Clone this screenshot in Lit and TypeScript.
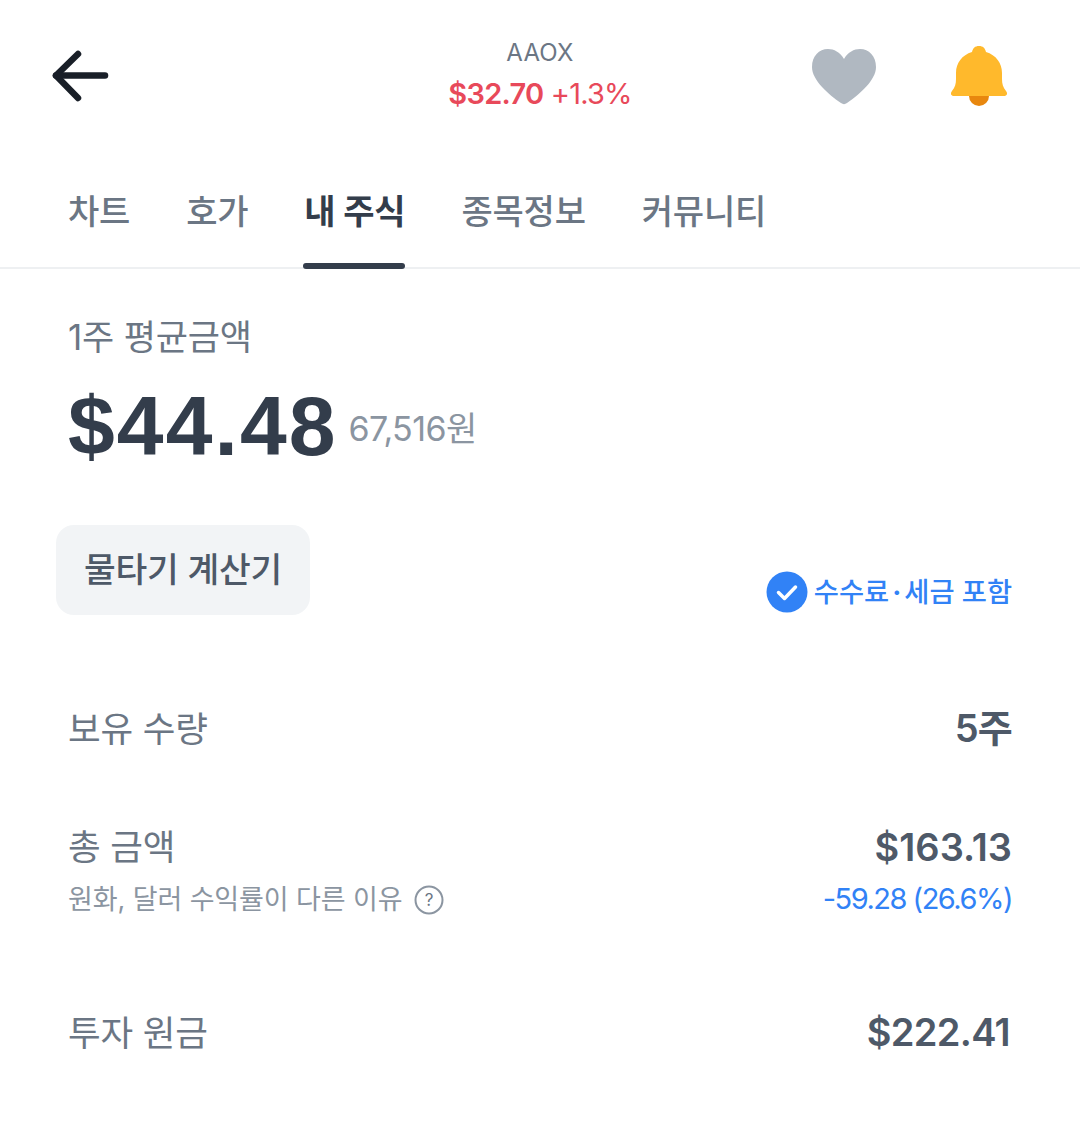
import { LitElement, html, css } from "lit";
import { customElement } from "lit/decorators.js";

@customElement("app-root")
export class AppRoot extends LitElement {
  static styles = css`
    :host { display: block; width: 1080px; height: 1139px; overflow: hidden; background: #fff; font-family: Inter, "Noto Sans CJK KR", sans-serif; color: #333d4b; }
    * { box-sizing: border-box; }
    .top { display: grid; grid-template-columns: 1fr auto 1fr; align-items: center; height: 152px; padding: 0 72px 0 48px; }
    .back { display: block; width: 64px; height: 60px; }
    .ticker { text-align: center; margin-top: -1px; transform: translateX(12px); }
    .sym { font-size: 24px; line-height: 30px; color: #6b7684; letter-spacing: 0.2px; }
    .quote { font-size: 29px; line-height: 40px; color: #e8495a; letter-spacing: -0.8px; margin-top: 6px; }
    .quote b { font-weight: 600; letter-spacing: -0.7px; }
    .icons { display: flex; justify-content: flex-end; gap: 74px; align-items: center; }
    .tabs { display: flex; height: 117px; border-bottom: 2px solid #eef0f2; padding-left: 68px; gap: 56px; position: relative; }
    .tab { font-size: 34px; line-height: 46px; padding-top: 37px; color: #6b7684; position: relative; font-weight: 500; letter-spacing: -0.2px; }
    .tab.on { color: #333d4b; font-weight: 700; }
    .tab.on::after { content: ""; position: absolute; left: -1px; right: 0; bottom: -2px; height: 6px; border-radius: 3px; background: #333d4b; }
    .main { padding: 45px 68px 0; }
    .lbl { font-size: 35px; line-height: 46px; color: #6b7684; letter-spacing: -0.2px; font-weight: 400; }
    .price { display: flex; align-items: center; gap: 11px; margin-top: 16px; }
    .price b { font-family: "Liberation Sans", Arial, sans-serif; font-size: 84px; line-height: 100px; font-weight: 700; letter-spacing: 2.1px; }
    .price span { font-size: 34px; color: #8b95a1; letter-spacing: -0.6px; }
    .tools { display: flex; justify-content: space-between; align-items: flex-end; margin: 49px 0 0 -12px; }
    .calc { width: 254px; height: 90px; border-radius: 18px; background: #f2f4f6; display: flex; align-items: center; justify-content: center; font-size: 34.500px; line-height: 1; color: #4e5968; font-weight: 500; letter-spacing: -0.2px; }
    .fee { display: flex; align-items: center; gap: 6px; font-size: 27.300px; line-height: 1; color: #3182f6; font-weight: 500; height: 42px; margin-bottom: 2px; }
    .fee span { padding-top: 2px; }
    .fee i { font-style: normal; font-weight: 700; margin: 0 3px; }
    .row { display: flex; justify-content: space-between; align-items: flex-start; }
    .k { font-size: 35.500px; line-height: 46px; color: #6b7684; letter-spacing: -0.2px; }
    .v { font-size: 38px; line-height: 46px; font-weight: 600; color: #4e5968; text-align: right; letter-spacing: -0.8px; margin-top: -2px; }
    .v.wide { letter-spacing: 0; margin-top: -1px; }
    .v.end { margin-right: 2px; letter-spacing: -0.7px; }
    .sub { display: flex; align-items: center; gap: 11px; font-size: 27px; line-height: 38px; color: #8b95a1; margin-top: 10px; letter-spacing: -0.1px; }
    .delta { font-size: 29px; line-height: 38px; color: #3182f6; font-weight: 400; margin-top: 10px; letter-spacing: -1.500px; }
    .r1 { margin-top: 92px; }
    .r2 { margin-top: 72px; }
    .r3 { margin-top: 92px; }
    svg { display: block; }
  `;

  render() {
    return html`
      <div class="top">
        <svg class="back" viewBox="0 0 64 60" fill="none" stroke="#191f28" stroke-width="6.500" stroke-linecap="round" stroke-linejoin="round">
          <path d="M30 8 L8 29.500 L30 52" /><path d="M8 29.500 H57" />
        </svg>
        <div class="ticker">
          <div class="sym">AAOX</div>
          <div class="quote"><b>$32.70</b> +1.3%</div>
        </div>
        <div class="icons">
          <svg width="64" height="58" viewBox="0 0 64 58"><path d="M32 12 C36 5 42 2 48 2 C57 2 64 9 64 20 C64 33 48 47 35 56 C33 57.500 31 57.500 29 56 C16 47 0 33 0 20 C0 9 7 2 16 2 C22 2 28 5 32 12 Z" fill="#b0b8c1"/></svg>
          <svg width="58" height="60" viewBox="0 0 58 60">
            <path d="M19 49 H39 V50 A10 10 0 0 1 19 50 Z" fill="#e8870e"/>
            <path d="M29 0 C33 0 35 2 36 6 C46 9 52 17 52 27 V33 C52 38 53 41 56 45 C58 47.500 57 50 54 50 H4 C1 50 0 47.500 2 45 C5 41 6 38 6 33 V27 C6 17 12 9 22 6 C23 2 25 0 29 0 Z" fill="#ffb92c"/>
          </svg>
        </div>
      </div>
      <div class="tabs">
        <div class="tab">차트</div><div class="tab">호가</div><div class="tab on">내 주식</div><div class="tab">종목정보</div><div class="tab">커뮤니티</div>
      </div>
      <div class="main">
        <div class="lbl">1주 평균금액</div>
        <div class="price"><b>$44.48</b><span>67,516원</span></div>
        <div class="tools">
          <div class="calc">물타기 계산기</div>
          <div class="fee">
            <svg width="42" height="42" viewBox="0 0 42 42"><circle cx="21" cy="21" r="20.500" fill="#3182f6"/><path d="M12.500 21.500 L18.500 27.500 L29.500 16" fill="none" stroke="#fff" stroke-width="3.500" stroke-linecap="round" stroke-linejoin="round"/></svg>
            <span>수수료<i>·</i>세금 포함</span>
          </div>
        </div>
        <div class="row r1"><div class="k">보유 수량</div><div class="v">5주</div></div>
        <div class="row r2">
          <div>
            <div class="k">총 금액</div>
            <div class="sub">원화, 달러 수익률이 다른 이유
              <svg width="30" height="30" viewBox="0 0 30 30" fill="none"><circle cx="15" cy="15" r="13.500" stroke="#8b95a1" stroke-width="2"/><text x="15" y="21" text-anchor="middle" font-size="17" font-family="Inter" fill="#6b7684">?</text></svg>
            </div>
          </div>
          <div>
            <div class="v wide">$163.13</div>
            <div class="delta">-59.28 (26.6%)</div>
          </div>
        </div>
        <div class="row r3"><div class="k">투자 원금</div><div class="v end">$222.41</div></div>
      </div>
    `;
  }
}
